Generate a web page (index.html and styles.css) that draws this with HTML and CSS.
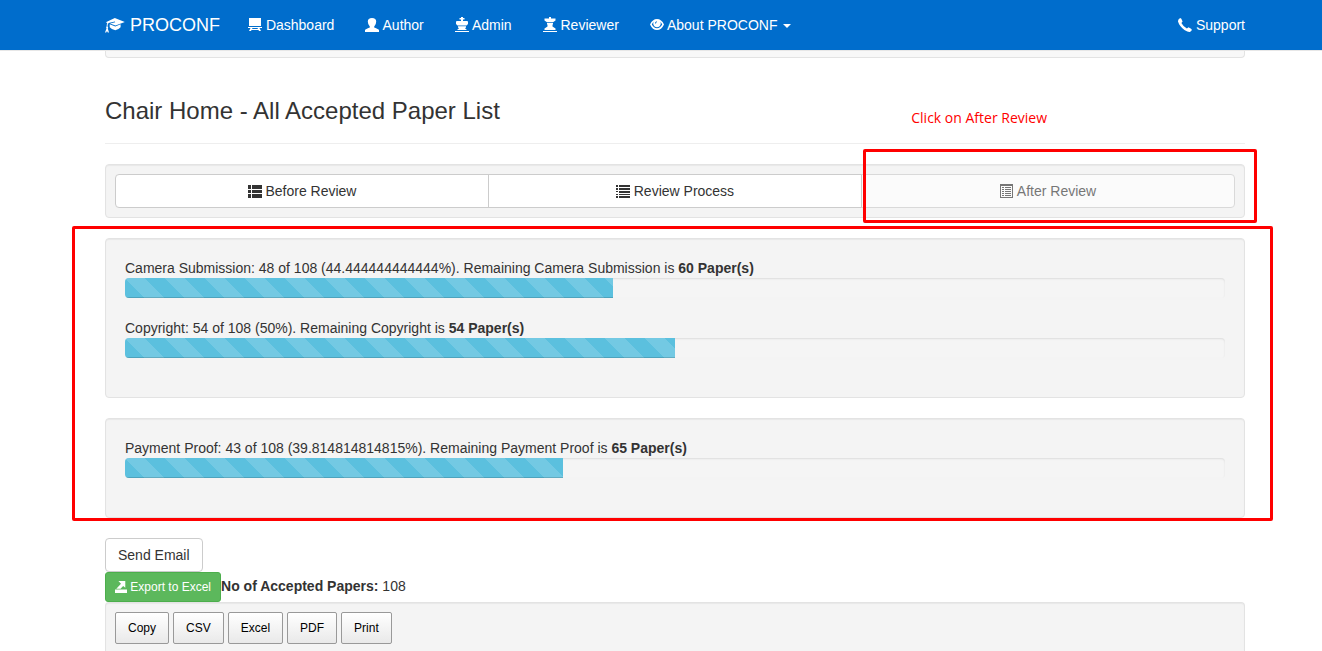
FILE: index.html
```html
<!DOCTYPE html>
<html lang="en">
<head>
<meta charset="utf-8">
<title>PROCONF - All Accepted Paper List</title>
<link rel="stylesheet" href="styles.css">
</head>
<body>
<header class="navbar">
  <a class="brand" href="#"><svg class="icon icon-brand" viewBox="0 0 20 15" aria-hidden="true"><path d="M9.8 0 19.8 3.9 10.5 7.5 5 5.4 10.2 4.2 9.9 3.4 3.6 4.9Q2.4 5.9 2.5 8.4L3.2 9.2 2.8 10.6 4 14.6H2.8L2 13.1 1.2 14.6H0L1.5 10.5 1.1 9.2 1.7 8.3Q1.6 6 2.3 4.9L.8 4.3ZM4.700 6.300 10.300 8.500 15.600 6.300V9.300Q13 12.200 10.300 12.200 7.300 12 4.700 9.200Z"/></svg> PROCONF</a>
  <nav class="nav">
    <a href="#"><svg class="icon" viewBox="0 0 14 14" aria-hidden="true"><path d="M1 0H13V8H1ZM0 9H14V10H0ZM2.5 10H4.5L4 11H10L9.500 10H11.5L13 13H11L10.500 12H3.500L3 13H1Z"/></svg> Dashboard</a>
    <a href="#"><svg class="icon" viewBox="0 0 14 14" aria-hidden="true"><path d="M7 0Q11.200 0 11.200 3.500 11.200 6.500 9.200 8.500V9.500Q13.500 11 14 12V14H0V12Q.5 11 4.800 9.500V8.500Q2.800 6.500 2.800 3.500 2.800 0 7 0Z"/></svg> Author</a>
    <a href="#"><svg class="icon icon-tall" viewBox="0 0 14 15" aria-hidden="true"><path d="M6 0H8V1H9.500V2.500H8V4H12.500L13 5V7L11.500 8.500H2.500L1 7V5L1.500 4H6V2.500H4.500V1H6ZM3 9.200H11V10.500L10 11.300 12 12.900H2L4 11.300 3 10.500ZM0 14H14V15H0Z"/></svg> Admin</a>
    <a href="#"><svg class="icon icon-tall" viewBox="0 0 14 15" aria-hidden="true"><path d="M6 0H8V1.500H12.500V3.500L10 5.200H4L1.500 3.500V1.500H6ZM4 6H10V7.500H9.500V9.500L12.500 11.500V12.900H1.500V11.500L4.500 9.500V7.500H4ZM0 14H14V15H0Z"/></svg> Reviewer</a>
    <a href="#"><svg class="icon" viewBox="0 0 14 14" aria-hidden="true"><path fill-rule="evenodd" d="M0 6.500Q2.500 1 7 1T14 6.500Q11.500 12 7 12T0 6.500ZM1.800 6.600Q3.800 10.300 7 10.300T12.200 6.600Q11.500 4.600 10.300 3.700 11 5 10.700 6.300 9.800 9.300 7 9.300T3.300 6.300Q3 5 3.700 3.700 2.500 4.600 1.800 6.600ZM6.800 3.200Q4.900 3.700 5 5.600H6Q6 4.400 7 4.100Z"/></svg> About PROCONF <span class="caret"></span></a>
  </nav>
  <a class="support" href="#"><svg class="icon" viewBox="0 0 14 14" aria-hidden="true"><path d="M2.200 0Q3.300 0 4.600 3.400L3.400 5Q5.200 8.500 8.900 10.600L10.500 9.300Q13.900 10.800 14 12L12.300 13.700Q10.800 14.600 6.400 11.900 1.400 8.400 0 3.600-.2 1.300 2.200 0Z"/></svg> Support</a>
</header>
<main class="content">
  <div class="well well-end"></div>
  <div class="page-header"><h3>Chair Home - All Accepted Paper List</h3></div>
  <section class="well well-sm stages">
    <div class="btn-group">
      <button class="btn" type="button"><svg class="icon" viewBox="0 0 14 14" aria-hidden="true"><path d="M0 1H3V5H0ZM4 1H14V5H4ZM0 6H3V9H0ZM4 6H14V9H4ZM0 10H3V14H0ZM4 10H14V14H4Z"/></svg> Before Review</button>
      <button class="btn" type="button"><svg class="icon" viewBox="0 0 14 14" aria-hidden="true"><path d="M0 1H2V3H0ZM3 1H14V3H3ZM0 4H2V6H0ZM3 4H14V6H3ZM0 7H2V8H0ZM3 7H14V9H3ZM0 10H2V11H0ZM3 10H14V11H3ZM0 12H2V14H0ZM3 12H14V14H3Z"/></svg> Review Process</button>
      <button class="btn" type="button" disabled><svg class="icon" viewBox="0 0 14 14" aria-hidden="true"><path fill-rule="evenodd" d="M0 0H13V14H0ZM1 2V13H12V2ZM2 3H4V4H2ZM5 3H11V4H5ZM2 5H4V6H2ZM5 5H11V6H5ZM2 7H4V8H2ZM5 7H11V8H5ZM2 9H4V10H2ZM5 9H11V10H5ZM2 11H4V12H2ZM5 11H11V12H5Z"/></svg> After Review</button>
    </div>
    <p class="note">Click on After Review</p>
    <div class="mark mark-stage"></div>
  </section>
  <div class="stats">
    <section class="well">
      <div id="camera">Camera Submission: 48 of 108 (44.444444444444%). Remaining Camera Submission is <b>60 Paper(s)</b></div>
      <div class="progress" role="progressbar" aria-labelledby="camera" aria-valuenow="44"><div class="bar" style="width:44.4%"></div></div>
      <div id="copyright">Copyright: 54 of 108 (50%). Remaining Copyright is <b>54 Paper(s)</b></div>
      <div class="progress" role="progressbar" aria-labelledby="copyright" aria-valuenow="50"><div class="bar" style="width:50%"></div></div>
    </section>
    <section class="well">
      <div id="payment">Payment Proof: 43 of 108 (39.814814814815%). Remaining Payment Proof is <b>65 Paper(s)</b></div>
      <div class="progress" role="progressbar" aria-labelledby="payment" aria-valuenow="40"><div class="bar" style="width:39.8%"></div></div>
    </section>
    <div class="mark mark-stats"></div>
  </div>
  <div><button class="btn" type="button">Send Email</button></div>
  <div class="export"><button class="btn btn-success" type="button"><svg class="icon" viewBox="0 0 14 14" aria-hidden="true"><path d="M4 0H12V8L9.500 5.800 6.500 9H1.500L7 3.300ZM0 10H14V14H0Z"/></svg> Export to Excel</button><span><b>No of Accepted Papers:</b> 108</span></div>
  <section class="well well-sm papers">
    <button class="tool" type="button">Copy</button>
    <button class="tool" type="button">CSV</button>
    <button class="tool" type="button">Excel</button>
    <button class="tool" type="button">PDF</button>
    <button class="tool" type="button">Print</button>
  </section>
</main>
</body>
</html>
```
FILE: styles.css
```css
* { box-sizing: border-box; }
body {
  margin: 0;
  min-height: 100vh;
  display: flex;
  flex-direction: column;
  background: #fff;
  color: #333;
  font: 14px/20px "Liberation Sans", Arial, sans-serif;
}
button { font-family: inherit; cursor: pointer; }
.icon { width: 14px; height: 14px; fill: currentColor; vertical-align: -2px; }
.icon-tall { height: 15px; }
.icon-brand { width: 20px; height: 15px; vertical-align: -2px; }

.navbar {
  display: flex;
  align-items: center;
  height: 51px;
  padding: 0 77px 0 105px;
  background: #006dcc;
  border-bottom: 1px solid #e7e7e7;
}
.navbar a { color: #fff; text-decoration: none; white-space: nowrap; }
.brand { font-size: 18px; margin-right: 13px; }
.nav { display: flex; gap: 1px; }
.nav a { padding: 15px; }
.support { margin-left: auto; }
.caret {
  display: inline-block;
  margin-left: 2px;
  vertical-align: middle;
  border: 4px solid transparent;
  border-top-color: currentColor;
  border-bottom: 0;
}

.content {
  flex: 1;
  display: flex;
  flex-direction: column;
  padding: 0 77px 0 105px;
}
.well {
  padding: 19px;
  margin-bottom: 20px;
  background: #f4f4f4;
  border: 1px solid #e3e3e3;
  border-radius: 4px;
  box-shadow: inset 0 1px 1px rgba(0, 0, 0, .05);
}
.well-sm { padding: 9px; }
.well-end {
  height: 7px;
  padding: 0;
  margin-bottom: 40px;
  background: #f8f8f8;
  border-top: 0;
  border-radius: 0 0 4px 4px;
  box-shadow: none;
}
.page-header { padding-bottom: 19px; margin-bottom: 20px; border-bottom: 1px solid #eee; }
h3 { margin: 0; font-size: 24px; line-height: 26px; font-weight: 400; }

.btn {
  padding: 6px 12px;
  border: 1px solid #ccc;
  border-radius: 4px;
  background: #fff;
  color: #333;
  font-size: 14px;
  line-height: 20px;
}
.btn-group { display: flex; }
.btn-group .btn { flex: 1; border-radius: 0; }
.btn-group .btn + .btn { margin-left: -1px; }
.btn-group .btn:first-child { border-radius: 4px 0 0 4px; }
.btn-group .btn:last-child { border-radius: 0 4px 4px 0; }
.btn:disabled { opacity: .65; cursor: not-allowed; }
.btn-success {
  padding: 5px 9px;
  border-color: #4cae4c;
  border-radius: 3px;
  background: #5cb85c;
  color: #fff;
  font-size: 12px;
  line-height: 18px;
}
.btn-success .icon { width: 12px; height: 12px; }

.progress {
  height: 20px;
  margin-bottom: 20px;
  overflow: hidden;
  background: #f5f5f5;
  border-radius: 4px;
  box-shadow: inset 0 1px 2px rgba(0, 0, 0, .1);
}
.bar {
  height: 100%;
  background: #5bc0de linear-gradient(45deg, rgba(255, 255, 255, .15) 25%, transparent 25%, transparent 50%, rgba(255, 255, 255, .15) 50%, rgba(255, 255, 255, .15) 75%, transparent 75%) 0 0 / 40px 40px;
  box-shadow: inset 0 -1px 0 rgba(0, 0, 0, .15);
}

.stages, .stats { position: relative; }
.mark { position: absolute; border: 3px solid #f00; border-radius: 2px; pointer-events: none; }
.mark-stage { top: -16px; right: -13px; bottom: -6px; width: 394px; }
.mark-stats { top: -12px; right: -28px; bottom: 17px; left: -33px; }
.note {
  position: absolute;
  top: -57px;
  right: 197px;
  margin: 0;
  color: #f00;
  font: 14px/20px "Open Sans", sans-serif;
}

.export { display: flex; align-items: center; }
.export span { margin-top: -2px; }
.papers {
  flex: 1;
  display: flex;
  gap: 4px;
  align-items: flex-start;
  margin-bottom: 0;
  padding-bottom: 7px;
  border-bottom: 0;
  border-radius: 4px 4px 0 0;
}
.tool {
  padding: 7px 12px;
  border: 1px solid #999;
  border-radius: 2px;
  background: linear-gradient(#fff, #e9e9e9);
  color: #000;
  font-size: 12px;
  line-height: 16px;
}
```
